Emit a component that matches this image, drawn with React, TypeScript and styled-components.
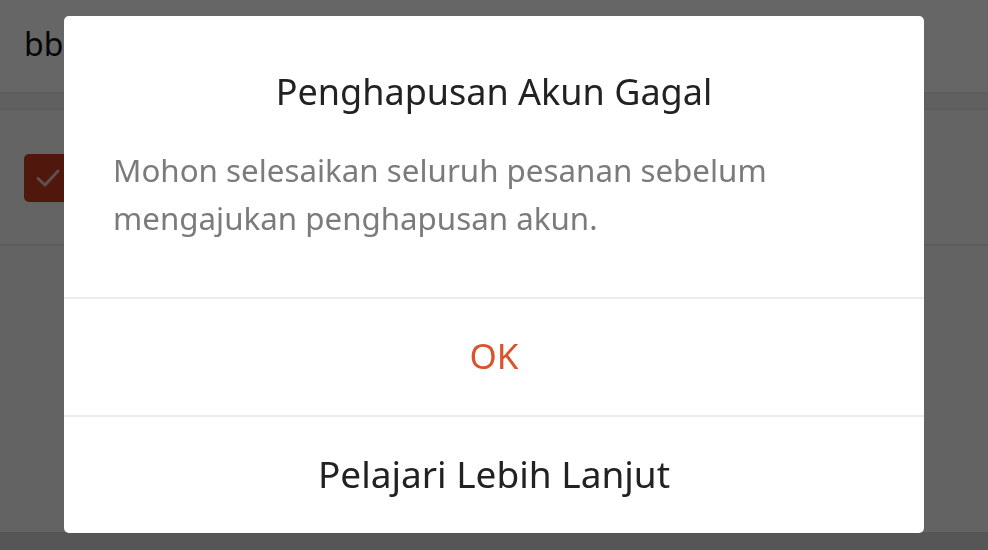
import styled, {createGlobalStyle} from "styled-components";

const GlobalStyle = createGlobalStyle`
  html, body {
    margin: 0;
    padding: 0;
    height: 100%;
  }
  body {
    font-family: "Noto Sans", "Open Sans", sans-serif;
    background: #f4f4f4;
  }
  #root {
    height: 100%;
  }
`

const App = () => {
    return (
        <>
            <GlobalStyle/>
            <Screen>
                <TopBar>
                    <TopTitle>bb</TopTitle>
                </TopBar>
                <SectionGap/>
                <ItemRow>
                    <CheckBox>
                        <svg width="26" height="20" viewBox="0 0 26 20" fill="none">
                            <path d="M3 10.5 L10 17 L23 3" stroke="#e9c9c2" strokeWidth="3" strokeLinecap="round"
                                  strokeLinejoin="round"/>
                        </svg>
                    </CheckBox>
                </ItemRow>
                <Filler/>
                <BottomBar/>
            </Screen>

            <Overlay>
                <Dialog role="dialog">
                    <Body>
                        <Title>Penghapusan Akun Gagal</Title>
                        <Message>Mohon selesaikan seluruh pesanan sebelum mengajukan penghapusan akun.</Message>
                    </Body>
                    <ActionButton $primary>OK</ActionButton>
                    <ActionButton>Pelajari Lebih Lanjut</ActionButton>
                </Dialog>
            </Overlay>
        </>
    )
}

const Screen = styled.div`
  display: flex;
  flex-direction: column;
  height: 100%;
  background-color: #f6f6f6;
`

const TopBar = styled.header`
  align-items: center;
  background-color: #ffffff;
  border-bottom: 2px solid #e8e8e8;
  display: flex;
  height: 92px;
  padding-left: 24px;
`

const TopTitle = styled.span`
  color: #111;
  font-size: 32px;
  margin-top: -6px;
`

const SectionGap = styled.div`
  background-color: #f1f1f1;
  border-bottom: 2px solid #e6e6e6;
  height: 14px;
`

const ItemRow = styled.div`
  align-items: center;
  background-color: #fbfbfb;
  border-bottom: 2px solid #e9e9e9;
  display: flex;
  height: 134px;
  padding-left: 24px;
`

const CheckBox = styled.div`
  align-items: center;
  background-color: #c83a22;
  border-radius: 5px;
  display: flex;
  height: 48px;
  justify-content: center;
  width: 48px;
  margin-top: 2px;
`

const Filler = styled.div`
  flex: 1;
  background-color: #f7f7f7;
`

const BottomBar = styled.div`
  background-color: #d6d6d6;
  flex: 0 0 18px;
`

const Overlay = styled.div`
  background-color: rgba(0, 0, 0, 0.6);
  display: flex;
  inset: 0;
  justify-content: center;
  position: fixed;
  padding-top: 16px;
  align-items: flex-start;
`

const Dialog = styled.div`
  background-color: #ffffff;
  border-radius: 5px;
  display: flex;
  flex-direction: column;
  overflow: hidden;
  width: 860px;
`

const Body = styled.div`
  display: flex;
  flex-direction: column;
  height: 281px;
  padding: 0 49px;
  box-sizing: border-box;
`

const Title = styled.h2`
  color: #222;
  font-size: 36px;
  font-weight: 400;
  line-height: 48px;
  margin: 52px 0 0;
  text-align: center;
`

const Message = styled.p`
  color: #7b7b7b;
  font-size: 31.3px;
  line-height: 48px;
  margin: 30px 0 0;
`

const ActionButton = styled.button<{ $primary?: boolean }>`
  background: none;
  border: none;
  border-top: 2px solid #ececec;
  color: ${p => p.$primary ? "#d9532d" : "#222"};
  cursor: pointer;
  font-family: inherit;
  font-size: ${p => p.$primary ? "35px" : "37px"};
  height: 118px;
  padding: 0 0 4px;
`

export default App;
